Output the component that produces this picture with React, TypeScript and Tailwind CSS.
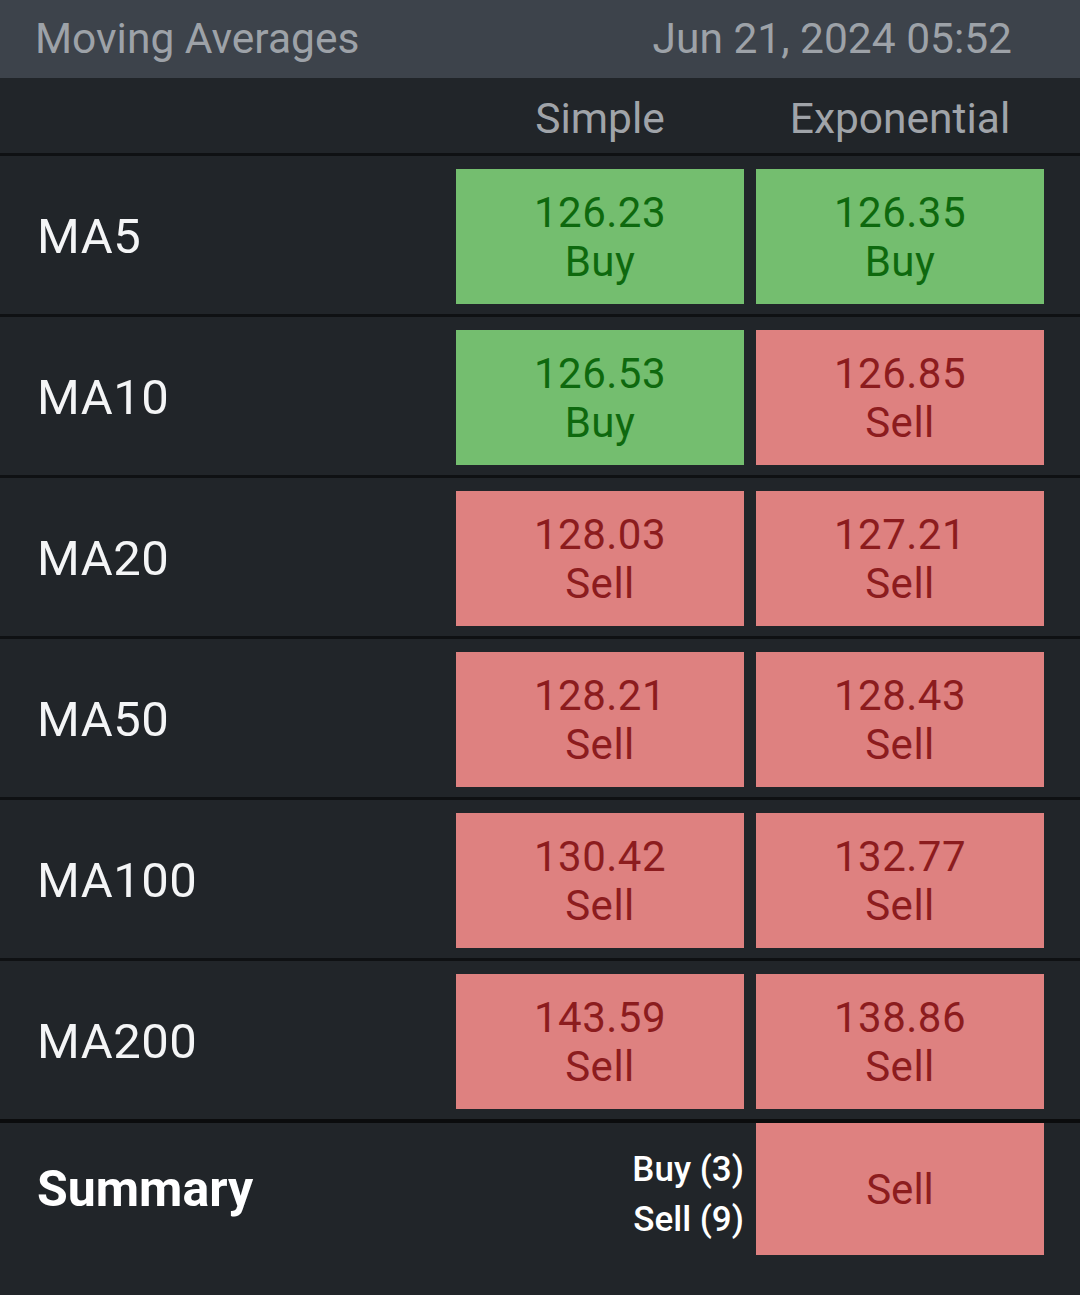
const rows = [
    { name: 'MA5', simple: { v: '126.23', s: 'Buy' }, exp: { v: '126.35', s: 'Buy' } },
    { name: 'MA10', simple: { v: '126.53', s: 'Buy' }, exp: { v: '126.85', s: 'Sell' } },
    { name: 'MA20', simple: { v: '128.03', s: 'Sell' }, exp: { v: '127.21', s: 'Sell' } },
    { name: 'MA50', simple: { v: '128.21', s: 'Sell' }, exp: { v: '128.43', s: 'Sell' } },
    { name: 'MA100', simple: { v: '130.42', s: 'Sell' }, exp: { v: '132.77', s: 'Sell' } },
    { name: 'MA200', simple: { v: '143.59', s: 'Sell' }, exp: { v: '138.86', s: 'Sell' } },
];

function Cell(props: { value?: string; signal: string }) {
    const buy = props.signal === 'Buy';
    return (
        <div
            className={`h-[135px] flex flex-col items-center justify-center text-[42px] leading-[49px] tracking-[0.5px] ${
                buy ? 'bg-[#74be6f] text-[#0e690e]' : 'bg-[#de8180] text-[#8c1c1e]'
            }`}
        >
            {props.value && <span>{props.value}</span>}
            <span>{props.signal}</span>
        </div>
    );
}

export default function App() {
    return (
        <div
            className="w-[1080px] h-[1295px] bg-[#212529] overflow-hidden"
            style={{ fontFamily: 'Roboto, "Noto Sans", sans-serif' }}
        >
            <div className="h-[78px] bg-[#3d434b] flex items-center justify-between pl-[35px] pr-[68px] text-[42.5px] text-[#9da2a8]">
                <span>Moving Averages</span>
                <span>Jun 21, 2024 05:52</span>
            </div>

            <div className="h-[75px] pt-[6px] grid grid-cols-[1fr_288px_288px] gap-x-3 pr-9 items-center text-[42.5px] text-[#a0a4a9]">
                <div />
                <div className="text-center">Simple</div>
                <div className="text-center">Exponential</div>
            </div>

            {rows.map((r) => (
                <div
                    key={r.name}
                    className="border-t-[3px] border-[#0f1113] pt-[13px] pb-[10px] pl-[37px] pr-9 grid grid-cols-[1fr_288px_288px] gap-x-3 items-center"
                >
                    <div className="text-[49px] text-[#f4f5f6] tracking-[0.5px]">{r.name}</div>
                    <Cell value={r.simple.v} signal={r.simple.s} />
                    <Cell value={r.exp.v} signal={r.exp.s} />
                </div>
            ))}

            <div className="border-t-4 border-[#0b0c0d] pl-[37px] pr-9 pb-10 grid grid-cols-[1fr_auto_288px] gap-x-3 items-center">
                <div className="text-[50px] font-bold text-white">Summary</div>
                <div className="text-[35px] leading-[50px] font-medium text-white text-right pt-3">
                    <div>Buy (3)</div>
                    <div>Sell (9)</div>
                </div>
                <div className="h-[132px] bg-[#de8180] text-[#8c1c1e] text-[42px] flex items-center justify-center">
                    Sell
                </div>
            </div>
        </div>
    );
}
